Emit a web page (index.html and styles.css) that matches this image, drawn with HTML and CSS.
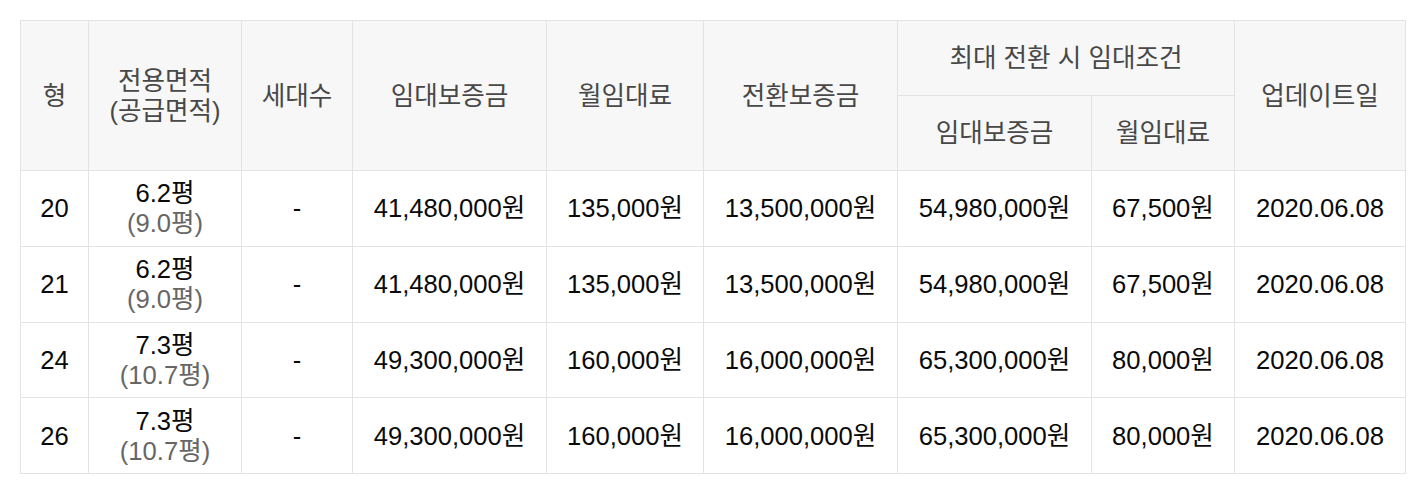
FILE: index.html
```html
<!DOCTYPE html>
<html lang="ko">
<head>
<meta charset="utf-8">
<link rel="stylesheet" href="styles.css">
</head>
<body>
<div class="wrap">
<table class="rent">
<colgroup>
<col class="c1"><col class="c2"><col class="c3"><col class="c4"><col class="c5"><col class="c6"><col class="c7"><col class="c8"><col class="c9">
</colgroup>
<thead>
<tr>
<th rowspan="2">형</th>
<th rowspan="2">전용면적<br>(공급면적)</th>
<th rowspan="2">세대수</th>
<th rowspan="2">임대보증금</th>
<th rowspan="2">월임대료</th>
<th rowspan="2">전환보증금</th>
<th colspan="2">최대 전환 시 임대조건</th>
<th rowspan="2">업데이트일</th>
</tr>
<tr>
<th>임대보증금</th>
<th>월임대료</th>
</tr>
</thead>
<tbody>
<tr><td>20</td><td>6.2평<br><span class="sub">(9.0평)</span></td><td>-</td><td>41,480,000원</td><td>135,000원</td><td>13,500,000원</td><td>54,980,000원</td><td>67,500원</td><td>2020.06.08</td></tr>
<tr><td>21</td><td>6.2평<br><span class="sub">(9.0평)</span></td><td>-</td><td>41,480,000원</td><td>135,000원</td><td>13,500,000원</td><td>54,980,000원</td><td>67,500원</td><td>2020.06.08</td></tr>
<tr><td>24</td><td>7.3평<br><span class="sub">(10.7평)</span></td><td>-</td><td>49,300,000원</td><td>160,000원</td><td>16,000,000원</td><td>65,300,000원</td><td>80,000원</td><td>2020.06.08</td></tr>
<tr><td>26</td><td>7.3평<br><span class="sub">(10.7평)</span></td><td>-</td><td>49,300,000원</td><td>160,000원</td><td>16,000,000원</td><td>65,300,000원</td><td>80,000원</td><td>2020.06.08</td></tr>
</tbody>
</table>
</div>
</body>
</html>
```
FILE: styles.css
```css
html, body { margin: 0; padding: 0; background: #fff; }
.wrap { padding: 20px 20px 0 20px; }
.rent {
  width: 1385px;
  table-layout: fixed;
  border-collapse: collapse;
  font-family: "Liberation Sans", "Noto Sans CJK KR", sans-serif;
  font-size: 25.6px;
  line-height: 30px;
  color: #111;
  border-top: 1px solid #c8c8c8;
}
.c1 { width: 68px; } .c2 { width: 153px; } .c3 { width: 111px; } .c4 { width: 194px; }
.c5 { width: 157px; } .c6 { width: 194px; } .c7 { width: 194px; } .c8 { width: 143px; } .c9 { width: 171px; }
.rent th, .rent td {
  border: 1px solid #e3e3e3;
  text-align: center;
  vertical-align: middle;
  padding: 0;
}
.rent th {
  background: #f7f7f7;
  color: #484848;
  font-weight: normal;
  height: 74px;
}
.rent td { height: 74.75px; color: #0a0a0a; }
.rent td .sub { color: #666; }
```
